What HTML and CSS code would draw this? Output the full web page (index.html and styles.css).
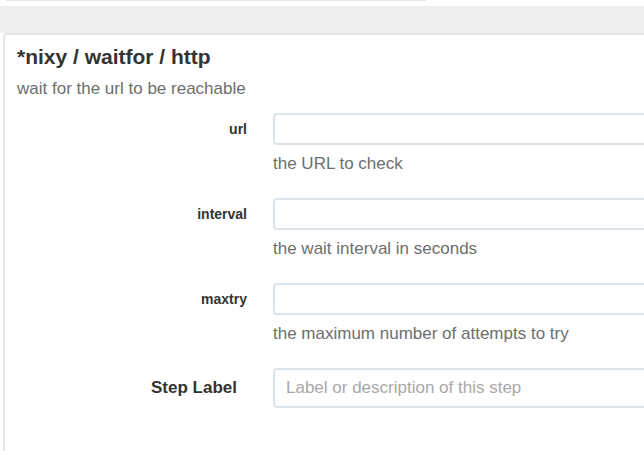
FILE: index.html
```html
<!DOCTYPE html>
<html>
<head>
<meta charset="utf-8">
<link rel="stylesheet" href="styles.css">
</head>
<body>
<div class="page">
  <div class="top-strip"><div class="top-line"></div></div>
  <div class="band"></div>
  <div class="panel">
    <h1 class="title">*nixy / waitfor / http</h1>
    <p class="subtitle">wait for the url to be reachable</p>
    <form class="form">
      <div class="row">
        <label class="label">url</label>
        <div class="field">
          <input class="input" type="text">
          <div class="help">the URL to check</div>
        </div>
      </div>
      <div class="row">
        <label class="label">interval</label>
        <div class="field">
          <input class="input" type="text">
          <div class="help">the wait interval in seconds</div>
        </div>
      </div>
      <div class="row">
        <label class="label">maxtry</label>
        <div class="field">
          <input class="input" type="text">
          <div class="help">the maximum number of attempts to try</div>
        </div>
      </div>
      <div class="row">
        <label class="label label-lg">Step Label</label>
        <div class="field">
          <input class="input input-lg" type="text" placeholder="Label or description of this step">
        </div>
      </div>
    </form>
  </div>
</div>
</body>
</html>
```
FILE: styles.css
```css
html, body {
  margin: 0;
  padding: 0;
  background: #ffffff;
  overflow: hidden;
  font-family: "Liberation Sans", Arial, Helvetica, sans-serif;
}
.page {
  height: 100vh;
  display: flex;
  flex-direction: column;
  overflow: hidden;
}
.top-strip {
  height: 6px;
  flex: none;
}
.top-line {
  width: 420px;
  margin-left: 6px;
  height: 1px;
  background: #e6e6e6;
}
.band {
  height: 27px;
  flex: none;
  background: #eeeeee;
}
.panel {
  flex: 1;
  min-height: 0;
  margin-left: 3px;
  border-top: 2px solid #e3e3e3;
  border-left: 2px solid #e6e6e6;
  border-top-left-radius: 4px;
  padding: 10px 0 0 12px;
  background: #fff;
  overflow: hidden;
}
.title {
  margin: 0;
  font-size: 21px;
  line-height: 24px;
  font-weight: bold;
  color: #333333;
}
.subtitle {
  margin: 10px 0 0 0;
  font-size: 17px;
  line-height: 20px;
  color: #6e6e6e;
}
.form {
  margin-top: 14px;
}
.row {
  display: grid;
  grid-template-columns: 230px minmax(0, 1fr);
  column-gap: 26px;
  align-items: start;
  margin-bottom: 24px;
}
.label {
  text-align: right;
  font-size: 14px;
  font-weight: bold;
  color: #333333;
  line-height: 32px;
}
.label-lg {
  font-size: 17px;
  line-height: 40px;
  padding-right: 10px;
}
.field {
  display: flex;
  flex-direction: column;
}
.input {
  box-sizing: border-box;
  height: 32px;
  width: calc(100% + 12px);
  border: 2px solid #dce4eb;
  border-radius: 4px;
  padding: 0 11px;
  font-family: inherit;
  font-size: 17px;
  background: #fff;
  outline: none;
}
.input-lg {
  height: 40px;
}
.input::placeholder {
  color: #a8a8a8;
}
.help {
  margin-top: 9px;
  font-size: 17px;
  line-height: 20px;
  color: #6e6e6e;
}
```
